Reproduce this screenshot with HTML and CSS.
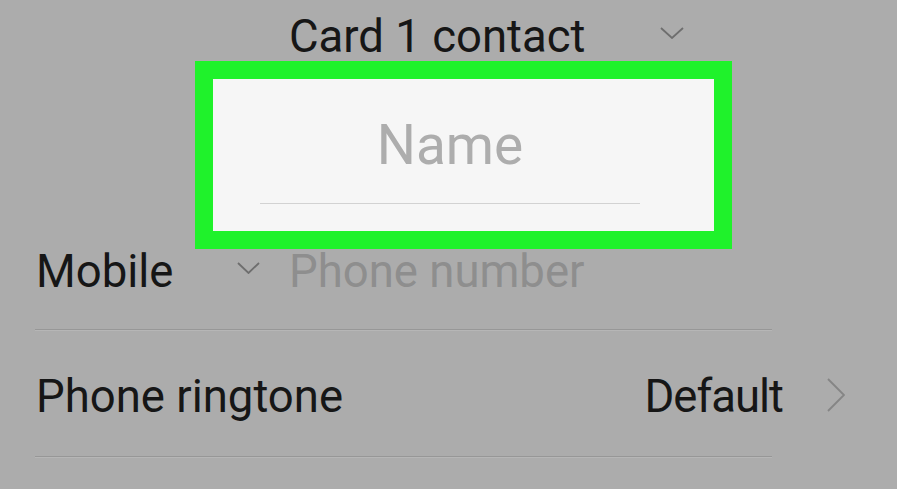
FILE: index.html
```html
<!DOCTYPE html>
<html lang="en">
<head>
<meta charset="utf-8">
<title>Card 1 contact</title>
<link rel="stylesheet" href="styles.css">
</head>
<body>
<div class="screen">
  <div class="title-row">
    <span class="title">Card 1 contact</span>
    <svg class="chev-down chev-top" width="24" height="12" viewBox="0 0 24 12"><polyline points="1,1 12,11 23,1" fill="none" stroke="#6e6e6e" stroke-width="1.8"/></svg>
  </div>
  <div class="name-box">
    <div class="name-field"><span class="placeholder">Name</span></div>
  </div>
  <div class="field-row mobile-row">
    <span class="label mobile-label">Mobile</span>
    <svg class="chev-down chev-mobile" width="23" height="12" viewBox="0 0 23 12"><polyline points="1,1 11.5,11 22,1" fill="none" stroke="#6e6e6e" stroke-width="1.8"/></svg>
    <span class="phone">Phone number</span>
  </div>
  <div class="divider"></div>
  <div class="field-row ringtone-row">
    <span class="label">Phone ringtone</span>
    <span class="value">Default</span>
    <svg class="chev-right" width="18" height="34" viewBox="0 0 18 34"><polyline points="1,1 17,17 1,33" fill="none" stroke="#858585" stroke-width="1.8"/></svg>
  </div>
  <div class="divider"></div>
</div>
</body>
</html>
```

FILE: styles.css
```css
html, body {
  margin: 0;
  padding: 0;
  background: #acacac;
}
.screen {
  width: 897px;
  height: 489px;
  overflow: hidden;
  background: #acacac;
  font-family: Roboto, "Noto Sans", sans-serif;
  color: #161616;
}
.title-row {
  display: flex;
  align-items: flex-start;
  height: 61px;
  box-sizing: border-box;
  padding-top: 14px;
  padding-left: 289px;
}
.title {
  width: 371px;
  font-size: 45.5px;
  line-height: 45px;
  white-space: nowrap;
}
.chev-top {
  margin-top: 13px;
}
.name-box {
  margin-left: 195px;
  width: 537px;
  height: 188px;
  box-sizing: border-box;
  border: 18px solid #1ff22b;
  background: #f6f6f6;
  padding-left: 47px;
}
.name-field {
  width: 380px;
  padding-top: 39px;
  padding-bottom: 30px;
  border-bottom: 1px solid #d2d2d2;
  text-align: center;
}
.placeholder {
  display: block;
  font-size: 55px;
  line-height: 55px;
  color: #adadad;
}
.field-row {
  display: flex;
  align-items: flex-start;
  margin-left: 35px;
  font-size: 45.5px;
  line-height: 45px;
  white-space: nowrap;
}
.mobile-row {
  padding-bottom: 35px;
}
.label {
  margin-left: 1px;
}
.mobile-label {
  width: 201px;
}
.chev-mobile {
  margin-top: 13px;
  margin-right: 29px;
}
.phone {
  color: #8e8e8e;
}
.divider {
  margin-left: 35px;
  width: 737px;
  height: 0;
  border-top: 1px solid #979797;
  border-bottom: 1px solid #b6b6b6;
}
.ringtone-row {
  width: 810px;
  padding-top: 43px;
  padding-bottom: 37px;
}
.value {
  margin-left: auto;
  margin-right: 44px;
  letter-spacing: -1px;
}
.chev-right {
  margin-top: 4px;
}
```
